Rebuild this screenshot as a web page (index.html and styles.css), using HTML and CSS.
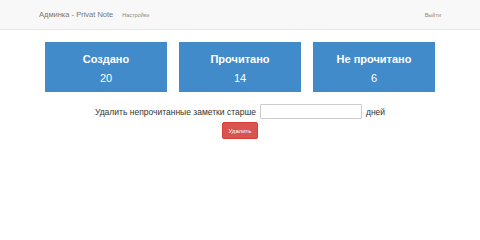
FILE: index.html
```html
<!DOCTYPE html>
<html lang="ru">
<head>
<meta charset="utf-8">
<title>Админка - Privat Note</title>
<link rel="stylesheet" href="styles.css">
</head>
<body>
<nav class="navbar">
  <div class="nav-left">
    <span class="brand">Админка - Privat Note</span>
    <span class="nav-link">Настройки</span>
  </div>
  <span class="nav-link">Выйти</span>
</nav>
<main class="content">
  <div class="stats">
    <div class="stat"><div class="stat-title">Создано</div><div class="stat-value">20</div></div>
    <div class="stat"><div class="stat-title">Прочитано</div><div class="stat-value">14</div></div>
    <div class="stat"><div class="stat-title">Не прочитано</div><div class="stat-value">6</div></div>
  </div>
  <form class="cleanup">
    <div class="cleanup-row">
      <span>Удалить непрочитанные заметки старше</span>
      <input class="days" type="text">
      <span>дней</span>
    </div>
    <button class="btn-danger" type="button">Удалить</button>
  </form>
</main>
</body>
</html>
```
FILE: styles.css
```css
html, body {
  margin: 0;
  padding: 0;
  background: #fff;
  font-family: "Liberation Sans", Arial, sans-serif;
}
.navbar {
  height: 29px;
  background: #f8f8f8;
  border-bottom: 1px solid #e7e7e7;
  display: flex;
  align-items: center;
  justify-content: space-between;
  padding: 0 39px;
}
.nav-left {
  display: flex;
  align-items: center;
  gap: 9px;
}
.brand {
  font-size: 7.5px;
  color: #777777;
}
.nav-link {
  font-size: 5.5px;
  color: #888888;
}
.content {
  padding-top: 12px;
}
.stats {
  display: flex;
  justify-content: center;
  gap: 12px;
}
.stat {
  width: 122px;
  height: 50px;
  background: #428bca;
  color: #fff;
  text-align: center;
  box-sizing: border-box;
  padding-top: 11px;
}
.stat-title {
  font-weight: bold;
  font-size: 11px;
  line-height: 13px;
}
.stat-value {
  font-size: 11px;
  line-height: 13px;
  margin-top: 6px;
}
.cleanup {
  margin-top: 12px;
  display: flex;
  flex-direction: column;
  align-items: center;
  gap: 3px;
}
.cleanup-row {
  display: flex;
  align-items: center;
  gap: 4px;
  font-size: 8.5px;
  color: #333;
}
.days {
  width: 102px;
  height: 15px;
  box-sizing: border-box;
  border: 1px solid #ccc;
  border-radius: 1px;
  padding: 0;
  margin: 0;
}
.btn-danger {
  background: #d9534f;
  color: #fff;
  border: 1px solid #d43f3a;
  border-radius: 2px;
  font-family: "Liberation Sans", Arial, sans-serif;
  font-size: 6px;
  width: 36px;
  height: 17px;
  padding: 0;
}
```
